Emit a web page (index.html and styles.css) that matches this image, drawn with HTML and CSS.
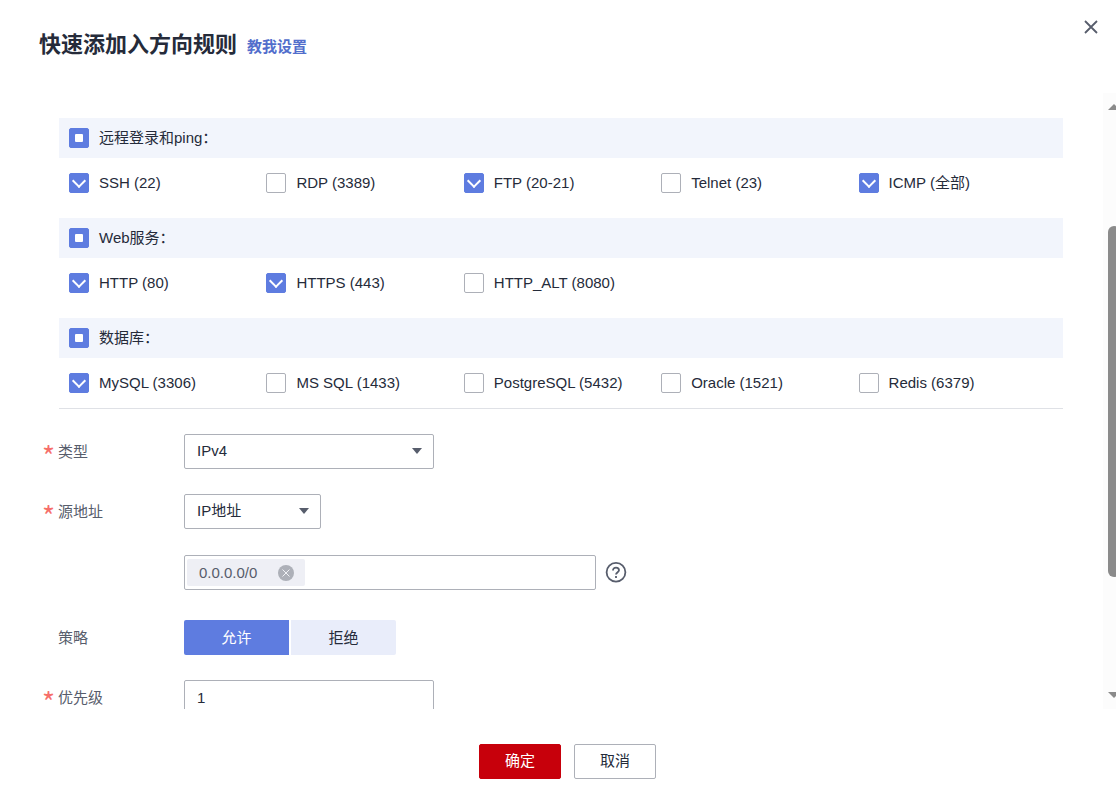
FILE: index.html
```html
<!DOCTYPE html>
<html lang="zh-CN">
<head>
  <meta charset="UTF-8" />
  <meta name="viewport" content="width=device-width, initial-scale=1" />
  <title>快速添加入方向规则</title>
  <link rel="stylesheet" href="styles.css">
</head>
<body>
  <div class="dialog" role="dialog" aria-labelledby="title">
    <div class="dialog-header">
      <h2 id="title">快速添加入方向规则</h2>
      <a href="#">教我设置</a>
      <button class="close" type="button" aria-label="关闭">
        <svg width="14" height="14" viewBox="0 0 14 14"><path d="M1 1L13 13M13 1L1 13" stroke="#575d6c" stroke-width="1.8" fill="none"/></svg>
      </button>
    </div>

    <div class="dialog-body">
      <div class="content">
        <div class="ports">
          <label class="group-title"><input type="checkbox" class="partial" checked />远程登录和ping：</label>
          <div class="group">
            <label><input type="checkbox" checked />SSH (22)</label>
            <label><input type="checkbox" />RDP (3389)</label>
            <label><input type="checkbox" checked />FTP (20-21)</label>
            <label><input type="checkbox" />Telnet (23)</label>
            <label><input type="checkbox" checked />ICMP (全部)</label>
          </div>
          <label class="group-title"><input type="checkbox" class="partial" checked />Web服务：</label>
          <div class="group">
            <label><input type="checkbox" checked />HTTP (80)</label>
            <label><input type="checkbox" checked />HTTPS (443)</label>
            <label><input type="checkbox" />HTTP_ALT (8080)</label>
          </div>
          <label class="group-title"><input type="checkbox" class="partial" checked />数据库：</label>
          <div class="group">
            <label><input type="checkbox" checked />MySQL (3306)</label>
            <label><input type="checkbox" />MS SQL (1433)</label>
            <label><input type="checkbox" />PostgreSQL (5432)</label>
            <label><input type="checkbox" />Oracle (1521)</label>
            <label><input type="checkbox" />Redis (6379)</label>
          </div>
        </div>

        <form class="form" id="rule-form">
          <div class="row">
            <label class="row-label required" for="type">类型</label>
            <div class="select">
              <select id="type">
                <option>IPv4</option>
                <option>IPv6</option>
              </select>
            </div>
          </div>
          <div class="row">
            <label class="row-label required" for="source">源地址</label>
            <div class="select small">
              <select id="source">
                <option>IP地址</option>
                <option>安全组</option>
              </select>
            </div>
          </div>
          <div class="row address-row">
            <span class="row-label"></span>
            <div class="tag-box">
              <span class="tag">0.0.0.0/0
                <button type="button" aria-label="删除">
                  <svg width="16" height="16" viewBox="0 0 16 16"><circle cx="8" cy="8" r="8" fill="#adb0b8"/><path d="M4.5 4.5L11.5 11.5M11.5 4.5L4.5 11.5" stroke="#f0f1f5" fill="none"/></svg>
                </button>
              </span>
              <input type="text" aria-label="IP地址" />
            </div>
            <svg class="help" width="22" height="22" viewBox="0 0 22 22" fill="none" stroke="#575d6c" stroke-width="1.8">
              <circle cx="11" cy="10.3" r="9.4"/>
              <path d="M8 8.4C8 6.6 9.2 5.6 11 5.6S14 6.7 14 8.2C14 10.1 11 10.3 11 12.6M11 14V16"/>
            </svg>
          </div>
          <div class="row">
            <span class="row-label">策略</span>
            <div class="switch">
              <button type="button" class="selected">允许</button>
              <button type="button">拒绝</button>
            </div>
          </div>
          <div class="row">
            <label class="row-label required" for="priority">优先级</label>
            <input class="text" type="text" id="priority" value="1" />
          </div>
        </form>
      </div>

      <div class="scrollbar" aria-hidden="true">
        <div class="arrow up"></div>
        <div class="thumb"></div>
        <div class="arrow down"></div>
      </div>
    </div>

    <div class="dialog-footer">
      <button class="primary" type="submit" form="rule-form">确定</button>
      <button type="button">取消</button>
    </div>
  </div>
</body>
</html>
```
FILE: styles.css
```css
* {
  box-sizing: border-box;
}
body {
  margin: 0;
  font-family: "Liberation Sans", "Noto Sans CJK SC", sans-serif;
  font-size: 15px;
  line-height: 20px;
  color: #252b3a;
  background: #fff;
}
button, input, select {
  font: inherit;
  color: inherit;
  margin: 0;
}
button {
  border: none;
  padding: 0;
  cursor: pointer;
}
svg {
  display: block;
}
.dialog {
  display: flex;
  flex-direction: column;
  height: 100vh;
}

/* header */
.dialog-header {
  flex: none;
  display: flex;
  align-items: baseline;
  height: 93px;
  padding: 29px 18px 0 39px;
}
.dialog-header h2 {
  margin: 0;
  font-size: 22px;
  line-height: 32px;
}
.dialog-header a {
  margin-left: 10px;
  font-weight: bold;
  color: #526ecc;
  text-decoration: none;
}
.close {
  align-self: flex-start;
  margin: -9px 0 0 auto;
  background: none;
}

/* body */
.dialog-body {
  flex: 1;
  display: flex;
  min-height: 0;
  overflow: hidden;
}
.content {
  flex: 1;
  padding: 25px 40px 0;
}
.ports {
  margin-left: 19px;
  border-bottom: 1px solid #dfe1e6;
}
.ports label {
  display: flex;
  align-items: center;
  gap: 10px;
}
.ports .group-title {
  height: 40px;
  padding: 0 10px;
  background: #f2f5fc;
}
.group {
  display: grid;
  grid-template-columns: repeat(5, 1fr);
  padding: 15px 7px 25px 10px;
}
.group:last-child {
  padding-bottom: 15px;
}
input[type="checkbox"] {
  appearance: none;
  display: grid;
  place-items: center;
  width: 20px;
  height: 20px;
  border: 1px solid #adb0b8;
  border-radius: 2px;
  background: #fff;
}
input[type="checkbox"]:checked {
  border-color: #5e7ce0;
  background: #5e7ce0;
}
input[type="checkbox"]:checked::before {
  content: "";
  width: 8px;
  height: 8px;
  margin-bottom: 4px;
  border: solid #fff;
  border-width: 0 2px 2px 0;
  transform: rotate(45deg);
}
input.partial:checked::before {
  margin: 0;
  border: none;
  border-radius: 1px;
  background: #fff;
  transform: none;
}

/* form */
.form {
  display: flex;
  flex-direction: column;
  gap: 25px;
  padding-top: 25px;
}
.row {
  display: flex;
  align-items: center;
  height: 35px;
}
.row-label {
  position: relative;
  width: 126px;
  margin-left: 18px;
  color: #575d6c;
}
.required::before {
  content: "*";
  position: absolute;
  left: -16px;
  top: 3px;
  font-family: "Noto Sans CJK SC", sans-serif;
  font-size: 28px;
  color: #f66f6a;
}
.select {
  position: relative;
  width: 250px;
}
.select.small {
  width: 137px;
}
.select::after {
  content: "";
  position: absolute;
  right: 12px;
  top: 14px;
  border: 5px solid transparent;
  border-top: 6px solid #575d6c;
  border-bottom: none;
  pointer-events: none;
}
select, .text, .tag-box {
  height: 35px;
  border: 1px solid #adb0b8;
  border-radius: 2px;
  background: #fff;
}
select {
  display: block;
  appearance: none;
  width: 100%;
  padding: 0 12px 2px;
}
.text {
  width: 250px;
  padding: 0 12px;
}
.address-row {
  height: 37px;
  margin-bottom: 4px;
}
.tag-box {
  display: flex;
  align-items: center;
  width: 412px;
  padding: 0 2px;
}
.tag {
  display: flex;
  align-items: center;
  justify-content: space-between;
  width: 118px;
  height: 27px;
  padding: 0 11px 0 12px;
  border-radius: 2px;
  color: #575d6c;
  background: #eeeff5;
}
.tag button {
  background: none;
}
.tag-box input {
  flex: 1;
  min-width: 0;
  border: none;
  outline: none;
}
.help {
  margin-left: 9px;
}
.switch {
  display: flex;
  gap: 2px;
}
.switch button {
  width: 105px;
  height: 35px;
  border-radius: 0 2px 2px 0;
  background: #e9edfa;
}
.switch .selected {
  border-radius: 2px 0 0 2px;
  color: #fff;
  background: #5e7ce0;
}

/* scrollbar */
.scrollbar {
  flex: none;
  display: grid;
  grid-template-rows: 122fr 351fr 121fr;
  width: 13px;
  padding: 11px 0 11px 5px;
  background: #fcfcfc;
  overflow: hidden;
}
.arrow {
  width: 12px;
  border: 6px solid transparent;
}
.up {
  height: 6px;
  border-top: none;
  border-bottom-color: #8b8b8b;
}
.down {
  height: 6px;
  align-self: end;
  border-bottom: none;
  border-top-color: #8b8b8b;
}
.thumb {
  width: 12px;
  border-radius: 6px;
  background: #8b8b8b;
}

/* footer */
.dialog-footer {
  flex: none;
  display: flex;
  justify-content: center;
  gap: 13px;
  height: 94px;
  padding: 35px 0 0 19px;
}
.dialog-footer button {
  width: 82px;
  height: 35px;
  padding-bottom: 2px;
  border: 1px solid #adb0b8;
  border-radius: 2px;
  background: #fff;
}
.dialog-footer .primary {
  border-color: #c7000b;
  color: #fff;
  background: #c7000b;
}
```
